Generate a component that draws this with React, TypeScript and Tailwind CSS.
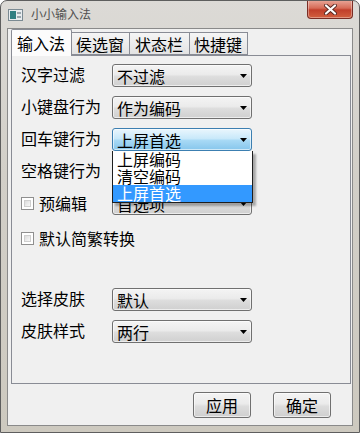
import React from "react";

function Arrow() {
  return (
    <svg width="7" height="4" viewBox="0 0 7 4" className="shrink-0">
      <path d="M0 0H7L3.5 4Z" fill="#000" />
    </svg>
  );
}

function Combo({ text, focused }: { text: string; focused?: boolean }) {
  return (
    <div
      className={
        focused
          ? "w-[140px] h-[23px] rounded-[3px] border border-[#3c7fb1] bg-[linear-gradient(#eaf6fd,#c9e9fa_45%,#a7d9f5_55%,#86c6ec)] flex items-center pl-[4px] pr-[4px] shadow-[inset_0_0_0_1px_rgba(255,255,255,0.6)]"
          : "w-[140px] h-[23px] rounded-[3px] border border-[#707070] bg-[linear-gradient(#f4f4f4,#ebebeb_45%,#dddddd_55%,#d0d0d0)] flex items-center pl-[4px] pr-[4px] shadow-[inset_0_0_0_1px_rgba(255,255,255,0.6)]"
      }
    >
      <span className="flex-1 text-[16px] leading-[18px] text-black whitespace-nowrap">
        {text}
      </span>
      <Arrow />
    </div>
  );
}

function Row({ label, value, focused }: { label: string; value: string; focused?: boolean }) {
  return (
    <div className="flex items-center h-[23px]">
      <span className="w-[91px] text-[16px] leading-[18px] pb-[4px] whitespace-nowrap">{label}</span>
      <Combo text={value} focused={focused} />
    </div>
  );
}

function Check({ label }: { label: string }) {
  return (
    <div className="flex items-center gap-[5px] pb-[1px]">
      <div className="w-[13px] h-[13px] border border-[#8f8f8f] bg-white p-[2px]">
        <div className="w-full h-full border border-[#cfcfcf] bg-[linear-gradient(135deg,#dcdcdc,#f8f8f8)]" />
      </div>
      <span className="text-[16px] leading-[18px]">{label}</span>
    </div>
  );
}

function Btn({ text }: { text: string }) {
  return (
    <div className="w-[58px] h-[26px] rounded-[3px] border border-[#707070] bg-[linear-gradient(#f4f4f4,#ebebeb_45%,#dddddd_55%,#cfcfcf)] shadow-[inset_0_0_0_1px_rgba(255,255,255,0.6)] flex items-center justify-center text-[16px] leading-[18px]">
      {text}
    </div>
  );
}

export default function App() {
  return (
    <div className="w-[360px] h-[433px] flex flex-col rounded-t-[7px] border border-[#5e5e5e] bg-[linear-gradient(#dcdad6,#d2cfc8_40%,#cdc9bf)] overflow-hidden font-['Noto_Sans_CJK_SC','Noto_Sans',sans-serif] text-black">
      {/* title bar */}
      <div className="h-[27px] flex items-start shrink-0">
        <svg width="15" height="12" viewBox="0 0 15 12" className="ml-[7px] mt-[8px]">
          <rect x="0.5" y="0.5" width="14" height="11" fill="#e8ecef" stroke="#7b8a92" />
          <rect x="2" y="2" width="6" height="8" fill="#2f7f82" />
          <rect x="9" y="3" width="4" height="2" fill="#9aa7ad" />
          <rect x="9" y="7" width="4" height="2" fill="#9aa7ad" />
        </svg>
        <span className="ml-[8px] mt-[6px] text-[12px] leading-[14px] text-[#505050]">小小输入法</span>
        <div className="ml-auto mr-[6px] w-[46px] h-[19px] -mt-[1px] rounded-b-[4px] border border-[#7a2d25] border-t-0 bg-[linear-gradient(#e9a99b,#d66b57_45%,#c13f2b_55%,#d2603f)] flex items-center justify-center shadow-[inset_0_0_0_1px_rgba(255,255,255,0.35)]">
          <svg width="13" height="11" viewBox="0 0 13 11">
            <path d="M2 1.5L11 9.5M11 1.5L2 9.5" stroke="#5a2a24" strokeWidth="4" strokeLinecap="round" />
            <path d="M2 1.5L11 9.5M11 1.5L2 9.5" stroke="#ffffff" strokeWidth="2.2" strokeLinecap="round" />
          </svg>
        </div>
      </div>

      {/* client */}
      <div className="mx-[6px] mb-[6px] flex-1 border border-[#8a8a8a] bg-[#f0f0f0] flex flex-col">
        {/* tabs */}
        <div className="flex items-end h-[26px] pl-[3px]">
          <div className="relative z-10 w-[61px] h-[27px] -mb-[1px] border border-b-0 border-[#898c95] bg-[#fcfcfc] rounded-t-[2px] flex items-center pl-[5px] text-[16px] leading-[18px]">
            输入法
          </div>
          <div className="w-[58px] h-[23px] border border-l-0 border-[#898c95] bg-[linear-gradient(#f5f5f5,#e3e3e3)] flex items-center pl-[4px] text-[16px] leading-[18px]">
            侯选窗
          </div>
          <div className="w-[60px] h-[23px] border border-l-0 border-[#898c95] bg-[linear-gradient(#f5f5f5,#e3e3e3)] flex items-center pl-[5px] text-[16px] leading-[18px]">
            状态栏
          </div>
          <div className="w-[58px] h-[23px] border border-l-0 border-[#898c95] bg-[linear-gradient(#f5f5f5,#e3e3e3)] flex items-center pl-[4px] text-[16px] leading-[18px]">
            快捷键
          </div>
        </div>

        {/* panel */}
        <div className="relative ml-[3px] mr-[1px] h-[329px] border border-[#898c95] bg-[#f0f0f0] pl-[9px] pt-[8px] flex flex-col">
          <div className="flex flex-col gap-[9px]">
            <Row label="汉字过滤" value="不过滤" />
            <Row label="小键盘行为" value="作为编码" />
            <Row label="回车键行为" value="上屏首选" focused />
            <Row label="空格键行为" value="" />
            <div className="flex items-center h-[23px]">
              <div className="w-[91px]">
                <Check label="预编辑" />
              </div>
              <Combo text="首选项" />
            </div>
          </div>
          <div className="flex items-center h-[23px] mt-[12px]">
            <Check label="默认简繁转换" />
          </div>
          <div className="flex flex-col gap-[9px] mt-[38px]">
            <Row label="选择皮肤" value="默认" />
            <Row label="皮肤样式" value="两行" />
          </div>

          {/* dropdown list */}
          <div className="absolute left-[100px] top-[95px] w-[141px] border border-t-0 border-[#1e1e1e] bg-white shadow-[3px_3px_2px_rgba(0,0,0,0.3)] flex flex-col">
            <div className="h-[17px] pl-[4px] text-[16px] leading-[17px]">上屏编码</div>
            <div className="h-[17px] pl-[4px] text-[16px] leading-[17px]">清空编码</div>
            <div className="h-[17px] pl-[4px] text-[16px] leading-[17px] bg-[#3399ff] text-white">上屏首选</div>
          </div>
        </div>

        {/* buttons */}
        <div className="flex justify-end gap-[22px] pr-[21px] mt-[8px]">
          <Btn text="应用" />
          <Btn text="确定" />
        </div>
      </div>
    </div>
  );
}
